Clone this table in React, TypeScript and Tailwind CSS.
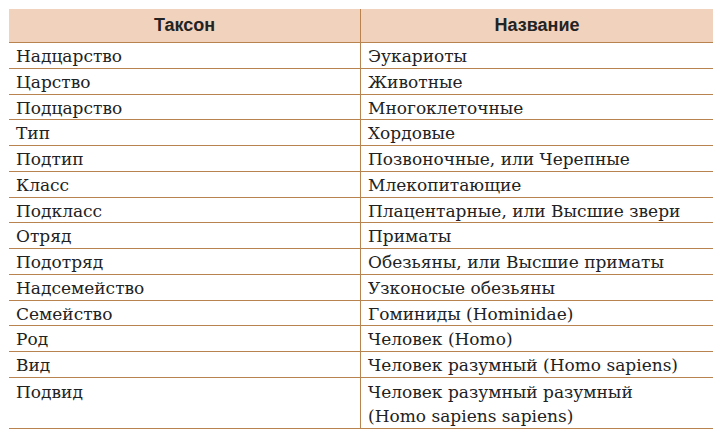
import React from 'react';

const rows: [string, string[]][] = [
  ['Надцарство', ['Эукариоты']],
  ['Царство', ['Животные']],
  ['Подцарство', ['Многоклеточные']],
  ['Тип', ['Хордовые']],
  ['Подтип', ['Позвоночные, или Черепные']],
  ['Класс', ['Млекопитающие']],
  ['Подкласс', ['Плацентарные, или Высшие звери']],
  ['Отряд', ['Приматы']],
  ['Подотряд', ['Обезьяны, или Высшие приматы']],
  ['Надсемейство', ['Узконосые обезьяны']],
  ['Семейство', ['Гоминиды (Hominidae)']],
  ['Род', ['Человек (Homo)']],
  ['Вид', ['Человек разумный (Homo sapiens)']],
  ['Подвид', ['Человек разумный разумный', '(Homo sapiens sapiens)']],
];

const App: React.FC = () => {
  return (
    <div className="w-[727px] h-[444px] bg-white pt-[9px] pl-[9px]">
      <div className="w-[704px] border-b border-[#b8834f]">
        <div className="flex h-[34px] bg-[#f1d2bd] border-b border-[#b8834f] font-['Liberation_Sans',sans-serif] font-bold text-[18px] text-[#232323]">
          <div className="w-[352px] flex items-center justify-center border-r border-[#b8834f]">Таксон</div>
          <div className="flex-1 flex items-center justify-center">Название</div>
        </div>
        {rows.map(([taxon, names], i) => {
          const last = i === rows.length - 1;
          return (
            <div
              key={taxon}
              className={`flex font-['DejaVu_Serif',serif] text-[17px] text-[#222222] pt-[2px] ${last ? 'leading-[24px]' : 'leading-[22.77px] border-b border-[#b8834f]'}`}
            >
              <div className="w-[352px] border-r border-[#b8834f] -mt-[2px] pt-[2px] pl-[7px]">{taxon}</div>
              <div className="flex-1 pl-[7px]">
                {names.map(n => (
                  <div key={n}>{n}</div>
                ))}
              </div>
            </div>
          );
        })}
      </div>
    </div>
  );
};

export default App;
